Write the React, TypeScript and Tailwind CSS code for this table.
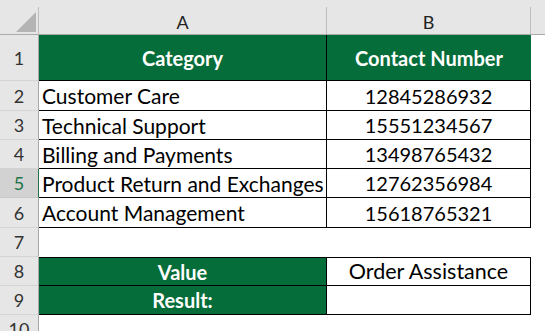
import React from "react";

type Row = {
  n: number;
  a?: string;
  b?: string;
  h: string;
  kind: "head" | "data" | "blank" | "label";
};

const rows: Row[] = [
  { n: 1, a: "Category", b: "Contact Number", h: "h-[46px]", kind: "head" },
  { n: 2, a: "Customer Care", b: "12845286932", h: "h-[30px]", kind: "data" },
  { n: 3, a: "Technical Support", b: "15551234567", h: "h-[29px]", kind: "data" },
  { n: 4, a: "Billing and Payments", b: "13498765432", h: "h-[29px]", kind: "data" },
  { n: 5, a: "Product Return and Exchanges", b: "12762356984", h: "h-[29px]", kind: "data" },
  { n: 6, a: "Account Management", b: "15618765321", h: "h-[30px]", kind: "data" },
  { n: 7, h: "h-[29px]", kind: "blank" },
  { n: 8, a: "Value", b: "Order Assistance", h: "h-[29px]", kind: "label" },
  { n: 9, a: "Result:", b: "", h: "h-[29px]", kind: "label" },
  { n: 10, h: "h-[29px]", kind: "blank" },
];

const font = { fontFamily: "Lato, 'Open Sans', sans-serif" };

function RowHeader({ n }: { n: number }) {
  const active = n === 5;
  return (
    <div
      className={`flex w-[39px] shrink-0 items-center justify-center border-b border-r text-[18px] ${
        active
          ? "border-b-[#c9c9c9] border-r-[#217346] bg-[#d2d2d2] text-[#217346]"
          : "border-b-[#d4d4d4] border-r-[#a8a8a8] bg-[#e6e6e6] text-[#333]"
      }`}
    >
      {n}
    </div>
  );
}

function SheetRow({ row }: { row: Row }) {
  if (row.kind === "blank") {
    return (
      <div className={`flex ${row.h}`}>
        <RowHeader n={row.n} />
        <div className="flex-1 bg-white" />
      </div>
    );
  }

  if (row.kind === "head") {
    return (
      <div className={`flex ${row.h}`}>
        <RowHeader n={row.n} />
        <div className="flex w-[288px] items-center justify-center border-b border-r border-black bg-[#056d39] text-[20px] font-bold text-white">
          {row.a}
        </div>
        <div className="flex w-[204px] items-center justify-center border-b border-black bg-[#056d39] text-[20px] font-bold text-white">
          {row.b}
        </div>
        <div className="flex-1 bg-white" />
      </div>
    );
  }

  if (row.kind === "label") {
    return (
      <div className={`flex ${row.h}`}>
        <RowHeader n={row.n} />
        <div
          className={`flex w-[288px] items-center justify-center border-b border-r border-black bg-[#056d39] text-[20px] font-bold text-white ${
            row.n === 8 ? "border-t" : ""
          }`}
        >
          {row.a}
        </div>
        <div
          className={`flex w-[204px] items-center justify-center border-b border-r border-black bg-white text-[21.5px] text-black ${
            row.n === 8 ? "border-t" : ""
          }`}
        >
          {row.b}
        </div>
        <div className="flex-1 bg-white" />
      </div>
    );
  }

  return (
    <div className={`flex ${row.h}`}>
      <RowHeader n={row.n} />
      <div className="flex w-[288px] items-center border-b border-r border-black bg-white pl-[3px] text-[21px] text-black">
        {row.a}
      </div>
      <div className="flex w-[204px] items-center justify-center border-b border-r border-black bg-white text-[20px] text-black">
        {row.b}
      </div>
      <div className="flex-1 bg-white" />
    </div>
  );
}

export default function App() {
  return (
    <div className="h-[331px] w-[545px] overflow-hidden bg-white leading-none" style={font}>
      <div className="h-[7px] bg-[#e6e6e6]" />
      <div className="flex h-[28px] border-b border-[#ababab] bg-[#e6e6e6] text-[18px] text-[#222]">
        <div className="relative w-[39px] shrink-0 border-r border-[#bdbdbd]">
          <svg className="absolute left-[16px] top-[5px]" width="20" height="20" viewBox="0 0 20 20">
            <polygon points="20,0 20,20 0,20" fill="#b4b4b4" />
          </svg>
        </div>
        <div className="flex w-[288px] items-center justify-center border-r border-[#bdbdbd] pt-[2px]">A</div>
        <div className="flex w-[204px] items-center justify-center border-r border-[#bdbdbd] pt-[2px]">B</div>
        <div className="flex-1" />
      </div>
      {rows.map((row) => (
        <SheetRow key={row.n} row={row} />
      ))}
    </div>
  );
}
